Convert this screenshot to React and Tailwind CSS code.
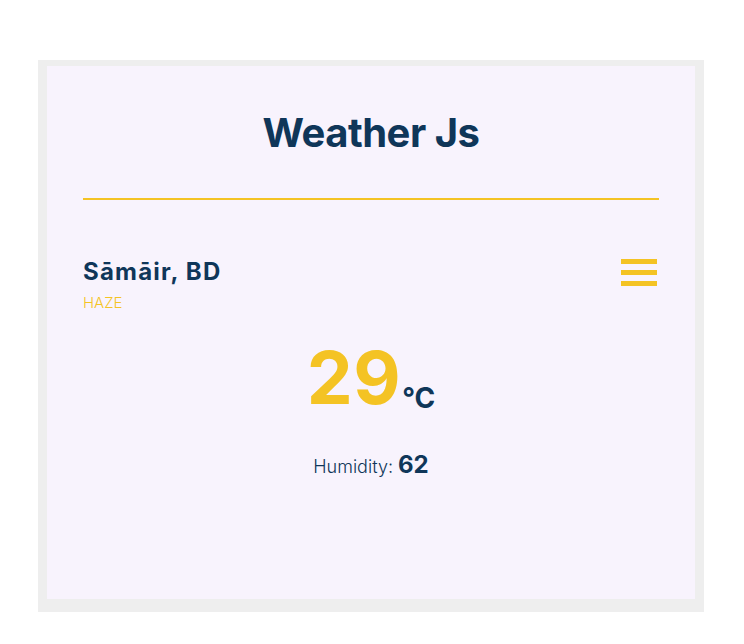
export default function App() {
  return (
    <div className="min-h-screen bg-white pt-[60px]" style={{ fontFamily: "Inter, 'Noto Sans', sans-serif" }}>
      <div className="ml-[38px] w-[666px] bg-[#eeeeee] pt-[6px] px-[9px] pb-[13px]">
        <div className="h-[533px] bg-[#f8f3fd] px-9">
          {/* Header */}
          <h1 className="pt-[43px] text-center text-[40px] leading-[48px] font-bold tracking-[-0.5px] text-[#0f3659]">
            Weather Js
          </h1>
          <div className="mt-[41px] h-[2px] bg-[#f4c324]" />

          {/* Location */}
          <div className="mt-[58px] flex items-start justify-between">
            <div>
              <div className="text-[24px] leading-[28px] font-bold tracking-[1.2px] text-[#0f3659]">Sāmāir, BD</div>
              <div className="mt-[8px] text-[15px] leading-[18px] font-light text-[#f4c324]">HAZE</div>
            </div>
            <div className="mr-[2px] mt-[1px] flex w-[36px] flex-col gap-[6px]">
              <span className="h-[5px] bg-[#f4c324]" />
              <span className="h-[5px] bg-[#f4c324]" />
              <span className="h-[5px] bg-[#f4c324]" />
            </div>
          </div>

          {/* Temperature */}
          <div className="mt-[26px] flex items-end justify-center">
            <span className="text-[73px] leading-[80px] font-bold tracking-[0.5px] text-[#f4c324]">29</span>
            <span className="mb-[5px] ml-[1px] text-[28px] leading-[30px] font-bold text-[#0f3659]">°C</span>
          </div>

          {/* Humidity */}
          <div className="mt-[29px] flex items-baseline justify-center gap-[5px]">
            <span className="text-[18px] font-light text-[#0f3659]">Humidity:</span>
            <span className="text-[24px] font-bold text-[#0f3659]">62</span>
          </div>
        </div>
      </div>
    </div>
  );
}
